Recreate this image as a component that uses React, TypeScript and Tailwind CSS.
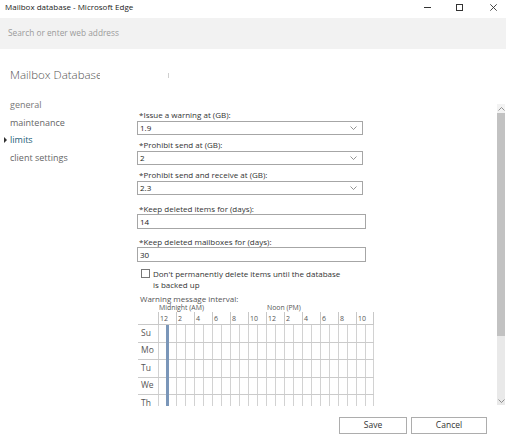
import React from "react";

const hourLabels = ["12", "2", "4", "6", "8", "10", "12", "2", "4", "6", "8", "10"];
const days = ["Su", "Mo", "Tu", "We", "Th", "Fr", "Sa"];
const hours = Array.from({ length: 24 }, (_, i) => i);

const Chevron = ({ up = false }: { up?: boolean }) => (
  <svg width="7" height="4" viewBox="0 0 7 4" className="block">
    <path
      d={up ? "M0.5 3.5 L3.5 0.5 L6.5 3.5" : "M0.5 0.5 L3.5 3.5 L6.5 0.5"}
      fill="none"
      stroke="#777"
      strokeWidth="0.8"
    />
  </svg>
);

const SelectBox = ({ value }: { value: string }) => (
  <div className="flex h-[14px] w-[226px] items-center justify-between border border-[#a6a6a6] bg-white pl-[2px] pr-[5px] text-[8px] leading-[12px] text-[#222]">
    <span>{value}</span>
    <Chevron />
  </div>
);

const TextBox = ({ value }: { value: string }) => (
  <div className="flex h-[15px] w-[229px] items-center border border-[#a6a6a6] bg-white pl-[2px] text-[8px] text-[#222]">
    {value}
  </div>
);

const Label = ({ children }: { children: React.ReactNode }) => (
  <div className="pl-[2px] text-[8px] leading-[11px] text-[#333]">{children}</div>
);

export default function App() {
  return (
    <div className="flex h-[441px] w-[508px] flex-col overflow-hidden bg-white font-['Open_Sans','Noto_Sans',sans-serif] text-[#333]">
      {/* title bar */}
      <div className="flex h-[18px] items-start pl-[5px] pr-[11px] pt-[1px]">
        <span className="text-[8px] leading-[12px] text-[#222]">Mailbox database - Microsoft Edge</span>
        <div className="ml-auto flex items-center pt-[3px]">
          <svg width="7" height="7" viewBox="0 0 7 7" className="mr-[25px]">
            <line x1="0" y1="3.5" x2="7" y2="3.5" stroke="#333" strokeWidth="1" />
          </svg>
          <svg width="7" height="7" viewBox="0 0 7 7" className="mr-[27px]">
            <rect x="0.5" y="0.5" width="6" height="6" fill="none" stroke="#333" strokeWidth="1" />
          </svg>
          <svg width="7" height="7" viewBox="0 0 7 7">
            <path d="M0.3 0.3 L6.7 6.7 M6.7 0.3 L0.3 6.7" stroke="#333" strokeWidth="0.9" />
          </svg>
        </div>
      </div>

      {/* address bar */}
      <div className="mr-[2px] flex h-[31px] items-center bg-[#f2f2f2] pl-[8px]">
        <span className="text-[8.3px] text-[#9a9a9a]">Search or enter web address</span>
      </div>

      {/* heading */}
      <div className="flex items-center pl-[10px] pt-[18px]">
        <div className="h-[16px] w-[90px] overflow-hidden whitespace-nowrap text-[11.5px] font-light leading-[16px] text-[#555]">
          Mailbox Database
        </div>
        <div className="ml-[68px] h-[5px] w-px bg-[#cfcfcf]" />
      </div>

      {/* body */}
      <div className="mt-[13px] flex h-[310px]">
        {/* nav */}
        <div className="w-[137px] pl-[10px] text-[9px] leading-[17.5px]">
          <div className="text-[#777]">general</div>
          <div className="text-[#666]">maintenance</div>
          <div className="flex items-center text-[#1c5d77]">
            <span className="-ml-[6px] mr-[3px] h-0 w-0 border-y-[3px] border-l-[3px] border-y-transparent border-l-[#333]" />
            limits
          </div>
          <div className="text-[#666]">client settings</div>
        </div>

        {/* scroll area */}
        <div className="mt-[8px] flex h-[302px] flex-1">
          <div className="flex-1 overflow-hidden pt-[5px]">
            <Label>*Issue a warning at (GB):</Label>
            <div className="mt-[1px]">
              <SelectBox value="1.9" />
            </div>
            <div className="mt-[4px]">
              <Label>*Prohibit send at (GB):</Label>
            </div>
            <div className="mt-[1px]">
              <SelectBox value="2" />
            </div>
            <div className="mt-[4px]">
              <Label>*Prohibit send and receive at (GB):</Label>
            </div>
            <div className="mt-[1px]">
              <SelectBox value="2.3" />
            </div>
            <div className="mt-[7.5px]">
              <Label>*Keep deleted items for (days):</Label>
            </div>
            <div className="mt-[0.5px]">
              <TextBox value="14" />
            </div>
            <div className="mt-[7px]">
              <Label>*Keep deleted mailboxes for (days):</Label>
            </div>
            <TextBox value="30" />

            <div className="mt-[5.5px] flex items-start">
              <div className="ml-[4px] mt-[1.5px] h-[9px] w-[9px] border border-[#777] bg-white" />
              <div className="ml-[3px] text-[8px] leading-[11px] text-[#333]">
                Don't permanently delete items until the database
                <br />
                is backed up
              </div>
            </div>

            <div className="mt-[4.5px] pl-[3px] text-[8px] leading-[10px] text-[#555]">
              Warning message interval:
            </div>

            <div className="flex h-[8px] items-center text-[6.9px] leading-[8px] text-[#555]">
              <span className="ml-[22px]">Midnight (AM)</span>
              <span className="ml-[63px]">Noon (PM)</span>
            </div>

            {/* schedule grid */}
            <div className="relative ml-[1px] w-[236px]">
              <div className="flex h-[13px] border-b border-[#c8c8c8]">
                <div className="w-[20px]" />
                {hourLabels.map((h, i) => (
                  <div
                    key={i}
                    className={`flex w-[18px] items-center border-l border-[#c8c8c8] pl-[1px] text-[7px] leading-[9px] text-[#555] ${
                      i === hourLabels.length - 1 ? "border-r" : ""
                    }`}
                  >
                    {h}
                  </div>
                ))}
              </div>
              {days.map((d) => (
                <div key={d} className="flex h-[17.5px] border-b border-[#cbcbcb]">
                  <div className="flex w-[20px] items-center pl-[3px] text-[8.5px] text-[#555]">{d}</div>
                  {hours.map((h) => (
                    <div
                      key={h}
                      className={`w-[9px] border-l border-[#d2d2d2] ${h === 23 ? "border-r" : ""}`}
                    />
                  ))}
                </div>
              ))}
              <div className="absolute bottom-0 left-[28px] top-[13px] w-[3px] bg-[#7a96b9]" />
            </div>
          </div>

          {/* scrollbar */}
          <div className="mr-[3px] flex h-[301px] w-[8px] flex-col">
            <div className="flex h-[9px] items-center justify-center bg-[#f3f3f3]">
              <Chevron up />
            </div>
            <div className="h-[223px] bg-[#c2c2c2]" />
            <div className="flex flex-1 flex-col justify-end bg-[#e9e9e9] pb-[2px]">
              <div className="flex justify-center">
                <Chevron />
              </div>
            </div>
          </div>
        </div>
      </div>

      {/* footer */}
      <div className="flex flex-1 items-start justify-end gap-[4px] pr-[21px] pt-[11px]">
        <button className="h-[17px] w-[68px] border border-[#adadad] bg-white text-[8.5px] text-[#333]">
          Save
        </button>
        <button className="h-[17px] w-[76px] border border-[#adadad] bg-white text-[8.5px] text-[#333]">
          Cancel
        </button>
      </div>
    </div>
  );
}
